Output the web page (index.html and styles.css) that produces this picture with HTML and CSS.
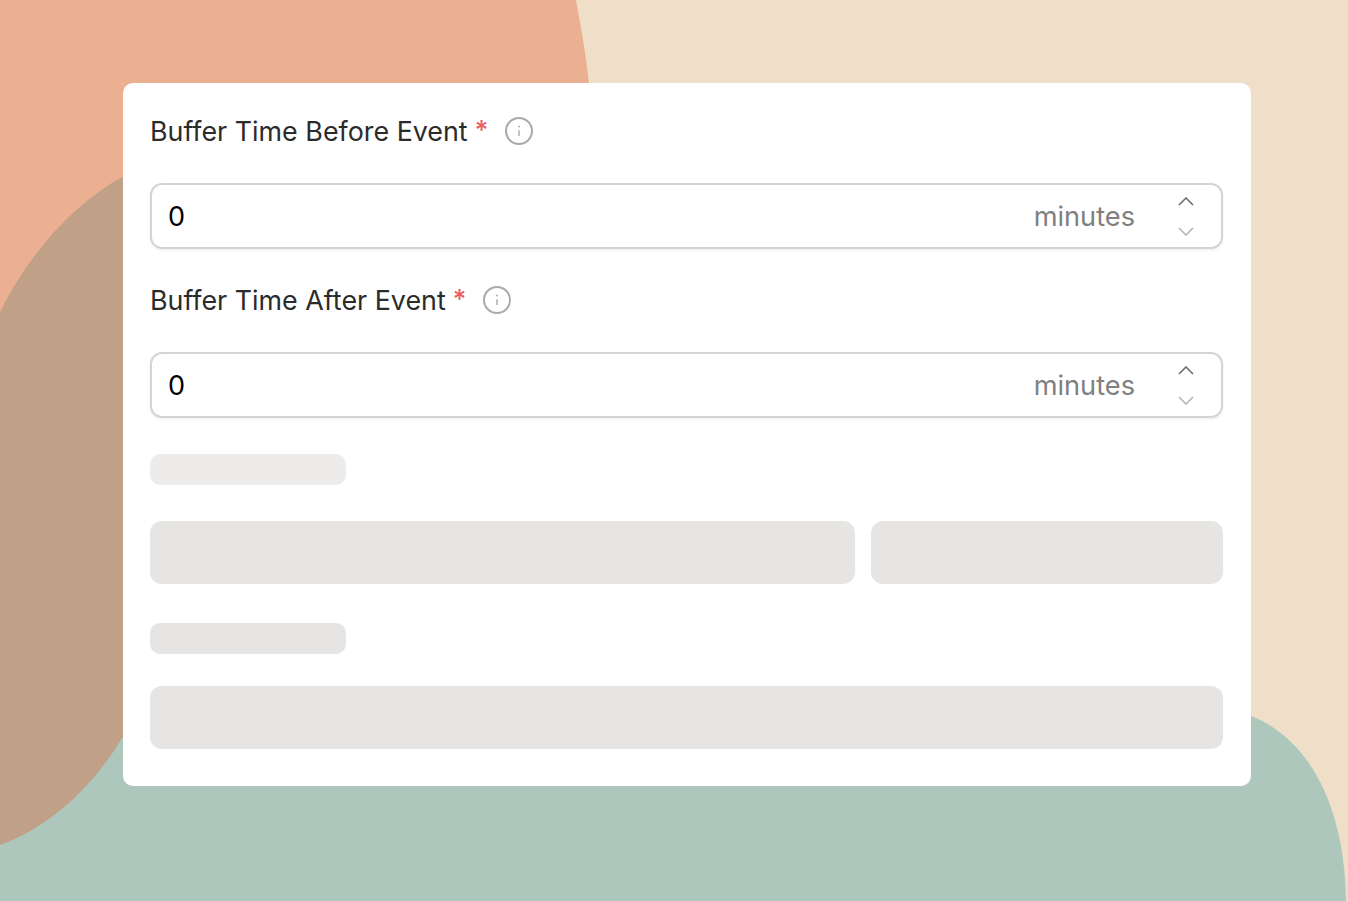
FILE: index.html
```html
<!DOCTYPE html>
<html lang="en">
<head>
    <meta charset="UTF-8">
    <title>Buffer Time</title>
    <link rel="stylesheet" href="styles.css">
</head>
<body>
<svg class="backdrop" viewBox="0 0 1348 901" aria-hidden="true">
    <path class="shape-peach" d="M0 0H576C581 27 586 55 589 83L600 230L400 500L0 600Z"/>
    <path class="shape-teal" d="M0 901V600L122 720L1251 716C1308 738 1345 805 1346 901Z"/>
    <path class="shape-tan" d="M0 312C28 255 72 205 122 177L400 300V600L122 738C88 795 42 830 0 845Z"/>
</svg>
<div class="card">
    <div class="field-label">
        <span>Buffer Time Before Event</span>
        <span class="required">*</span>
        <svg class="info" viewBox="0 0 28 28"><circle cx="14" cy="14" r="13"/><path d="M14 13.2V19"/><circle class="dot" cx="14" cy="9.6" r="1"/></svg>
    </div>
    <div class="number-input">
        <span class="value">0</span>
        <span class="unit">minutes</span>
        <div class="stepper">
            <svg class="up" viewBox="0 0 16 9"><path d="M1 8L8 1L15 8"/></svg>
            <svg class="down" viewBox="0 0 16 9"><path d="M1 1L8 8L15 1"/></svg>
        </div>
    </div>
    <div class="field-label">
        <span>Buffer Time After Event</span>
        <span class="required">*</span>
        <svg class="info" viewBox="0 0 28 28"><circle cx="14" cy="14" r="13"/><path d="M14 13.2V19"/><circle class="dot" cx="14" cy="9.6" r="1"/></svg>
    </div>
    <div class="number-input">
        <span class="value">0</span>
        <span class="unit">minutes</span>
        <div class="stepper">
            <svg class="up" viewBox="0 0 16 9"><path d="M1 8L8 1L15 8"/></svg>
            <svg class="down" viewBox="0 0 16 9"><path d="M1 1L8 8L15 1"/></svg>
        </div>
    </div>
    <div class="skeleton skeleton-label first"></div>
    <div class="skeleton-row">
        <div class="skeleton skeleton-block wide"></div>
        <div class="skeleton skeleton-block narrow"></div>
    </div>
    <div class="skeleton skeleton-label second"></div>
    <div class="skeleton skeleton-block"></div>
</div>
</body>
</html>
```

FILE: styles.css
```css
* {
    box-sizing: border-box;
}

body {
    margin: 0;
    height: 901px;
    overflow: hidden;
    background-color: #efdfc9;
    font-family: Inter, "Liberation Sans", sans-serif;
    padding: 83px 97px 0 123px;
}

.backdrop {
    position: absolute;
    top: 0;
    left: 0;
    width: 1348px;
    height: 901px;
}

.shape-peach {
    fill: #ebb091;
}

.shape-teal {
    fill: #adc7bd;
}

.shape-tan {
    fill: #c0a087;
}

.card {
    position: relative;
    width: 1128px;
    height: 703px;
    padding: 27px 28px 27px 27px;
    background: white;
    border-radius: 10px;
}

.field-label {
    display: flex;
    align-items: center;
    height: 42px;
    font-size: 26.85px;
    color: #2b2b2b;
}

.required {
    margin-left: 7px;
    margin-top: -3px;
    color: #ec5a5f;
    font-size: 26px;
    font-weight: 500;
}

.info {
    width: 28px;
    height: 28px;
    margin-left: 17px;
    fill: none;
    stroke: #a9a9ae;
    stroke-width: 2;
}

.info path {
    stroke-width: 1.4;
}

.info .dot {
    fill: #a9a9ae;
    stroke: none;
}

.number-input {
    display: flex;
    align-items: center;
    height: 66px;
    margin-top: 31px;
    margin-bottom: 30px;
    padding: 0 27px 0 16px;
    border: 2px solid #d4d4d4;
    border-radius: 12px;
    box-shadow: 0 1px 3px rgba(0, 0, 0, 0.08);
}

.value {
    flex: 1;
    font-size: 27px;
    color: #000;
}

.unit {
    font-size: 27.2px;
    color: #808080;
}

.stepper {
    display: flex;
    flex-direction: column;
    gap: 21px;
    margin-left: 43px;
}

.stepper svg {
    display: block;
    width: 16px;
    height: 9px;
    fill: none;
    stroke-width: 1.6;
}

.up {
    stroke: #6e6e6e;
}

.down {
    stroke: #b5b5b5;
}

.skeleton {
    background-color: #e6e5e3;
    border-radius: 12px;
}

.skeleton-label {
    width: 196px;
    height: 31px;
    border-radius: 10px;
}

.skeleton-label.first {
    margin-top: 36px;
    background-color: #edecea;
}

.skeleton-label.second {
    margin-top: 39px;
    margin-bottom: 32px;
}

.skeleton-row {
    display: flex;
    gap: 16px;
    margin-top: 36px;
}

.skeleton-block {
    height: 63px;
}

.skeleton-block.wide {
    width: 705px;
}

.skeleton-block.narrow {
    flex: 1;
}
```
